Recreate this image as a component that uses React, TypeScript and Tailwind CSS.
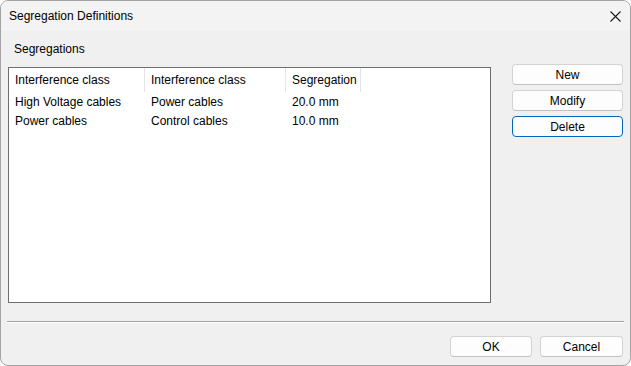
interface Row {
  from: string;
  to: string;
  distance: string;
}

const rows: Row[] = [
  { from: "High Voltage cables", to: "Power cables", distance: "20.0 mm" },
  { from: "Power cables", to: "Control cables", distance: "10.0 mm" },
];

function DialogButton({
  label,
  focused = false,
  className = "",
}: {
  label: string;
  focused?: boolean;
  className?: string;
}) {
  return (
    <button
      className={`h-[21px] rounded-[4px] bg-[#fdfdfd] text-[12px] text-black leading-none flex items-center justify-center ${
        focused
          ? "border border-[#0067c0] shadow-[inset_0_0_0_1px_#ffffff]"
          : "border border-[#d3d3d3] border-b-[#c0c0c0]"
      } ${className}`}
    >
      {label}
    </button>
  );
}

export default function App() {
  return (
    <div
      className="w-[631px] h-[366px] bg-[#f0f0f0] border border-[#a3a3a3] rounded-[8px] overflow-hidden flex flex-col text-black"
      style={{ fontFamily: '"Liberation Sans", Arial, sans-serif' }}
    >
      <div className="h-[30px] bg-[#f3f3f3] flex items-center justify-between pl-[8px] pr-[9px] shrink-0">
        <span className="text-[12px]">Segregation Definitions</span>
        <svg width="11" height="11" viewBox="0 0 11 11" className="mt-[1px]">
          <path d="M0.5 0.5 L10.5 10.5 M10.5 0.5 L0.5 10.5" stroke="#1a1a1a" strokeWidth="1.1" />
        </svg>
      </div>

      <div className="flex-1 flex flex-col px-[6px]">
        <div className="pl-[7px] pt-[10px] h-[36px] text-[12px] leading-[16px]">Segregations</div>

        <div className="flex flex-row">
          <div className="w-[483px] h-[236px] ml-[1px] border border-[#6e6e6e] bg-white">
            <div className="flex flex-row h-[24px] text-[12px]">
              <div className="w-[136px] border-r border-[#e5e5e5] pl-[6px] flex items-center">
                Interference class
              </div>
              <div className="w-[141px] border-r border-[#e5e5e5] pl-[6px] flex items-center">
                Interference class
              </div>
              <div className="w-[75px] border-r border-[#e5e5e5] pl-[6px] flex items-center">
                Segregation
              </div>
            </div>
            {rows.map((row, idx) => (
              <div key={idx} className="flex flex-row h-[19px] text-[12px] items-center">
                <div className="w-[136px] pl-[6px]">{row.from}</div>
                <div className="w-[141px] pl-[6px]">{row.to}</div>
                <div className="w-[75px] pl-[6px]">{row.distance}</div>
              </div>
            ))}
          </div>

          <div className="ml-[21px] w-[111px] flex flex-col gap-[5px] -mt-[3px]">
            <DialogButton label="New" />
            <DialogButton label="Modify" />
            <DialogButton label="Delete" focused />
          </div>
        </div>

        <div className="mt-[18px] h-[1px] bg-[#a0a0a0] border-b border-white box-content"></div>

        <div className="flex flex-row justify-end gap-[8px] mt-[13px] pr-[1px]">
          <DialogButton label="OK" className="w-[82px]" />
          <DialogButton label="Cancel" className="w-[83px]" />
        </div>
      </div>
    </div>
  );
}
